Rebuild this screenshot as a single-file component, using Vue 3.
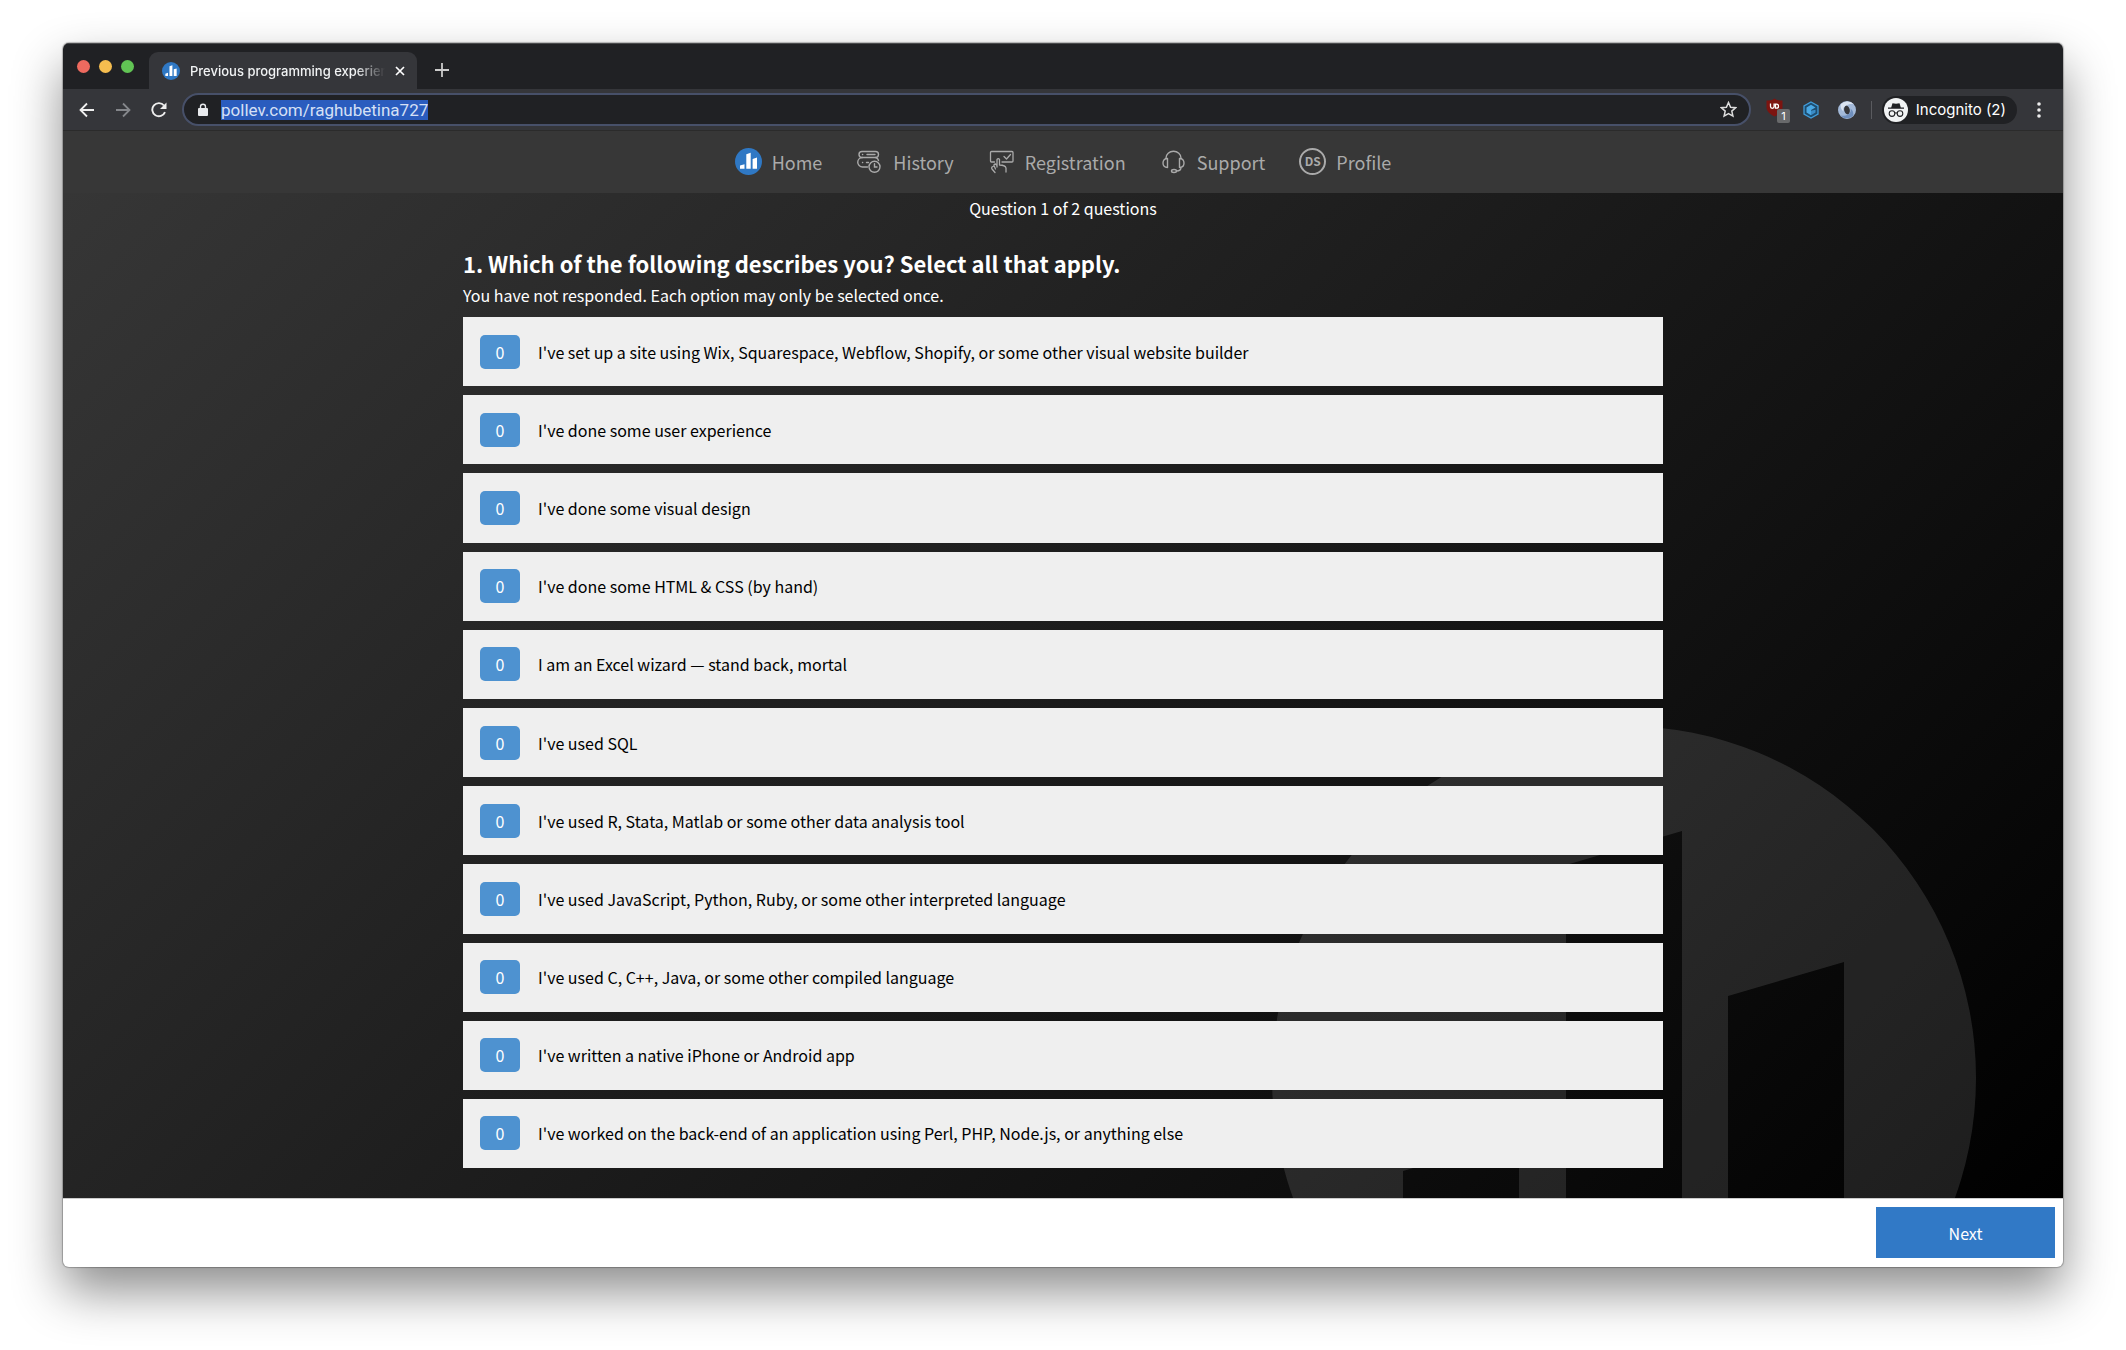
<script setup>
import { ref } from "vue";

const url = ref("pollev.com/raghubetina727");

const links = [
  { name: "Home", icon: "home" },
  { name: "History", icon: "history" },
  { name: "Registration", icon: "registration" },
  { name: "Support", icon: "support" },
  { name: "Profile", icon: "profile" },
];

const options = ref([
  { text: "I've set up a site using Wix, Squarespace, Webflow, Shopify, or some other visual website builder", count: 0 },
  { text: "I've done some user experience", count: 0 },
  { text: "I've done some visual design", count: 0 },
  { text: "I've done some HTML & CSS (by hand)", count: 0 },
  { text: "I am an Excel wizard — stand back, mortal", count: 0 },
  { text: "I've used SQL", count: 0 },
  { text: "I've used R, Stata, Matlab or some other data analysis tool", count: 0 },
  { text: "I've used JavaScript, Python, Ruby, or some other interpreted language", count: 0 },
  { text: "I've used C, C++, Java, or some other compiled language", count: 0 },
  { text: "I've written a native iPhone or Android app", count: 0 },
  { text: "I've worked on the back-end of an application using Perl, PHP, Node.js, or anything else", count: 0 },
]);

function select(option) {
  if (option.count === 0) {
    option.count = 1;
  }
}
</script>

<template>
  <div class="desktop">
    <div class="window">
      <div class="tab-bar">
        <div class="lights">
          <button class="light red" aria-label="Close window"></button>
          <button class="light yellow" aria-label="Minimize window"></button>
          <button class="light green" aria-label="Zoom window"></button>
        </div>
        <div class="tab">
          <svg class="favicon" viewBox="0 0 27 27">
            <circle cx="13.5" cy="13.5" r="13.5" fill="#2f78c4" />
            <path fill="#fff" d="M5 17.5l4-1.2v4.7h-4zM11.2 6.2l4.4-1.2v16h-4.4zM17.6 11l4.4-1.3v11.3h-4.4z" />
          </svg>
          <span class="tab-title">Previous programming experience</span>
          <button class="icon-button" aria-label="Close tab">
            <svg width="10" height="10" viewBox="0 0 10 10"><path d="M1 1l8 8M9 1l-8 8" stroke="#fff" stroke-width="1.7" /></svg>
          </button>
        </div>
        <button class="icon-button new-tab" aria-label="New tab">
          <svg width="14" height="14" viewBox="0 0 14 14"><path d="M7 0v14M0 7h14" stroke="#ccc" stroke-width="1.8" /></svg>
        </button>
      </div>

      <div class="toolbar">
        <div class="arrows">
          <button class="icon-button" aria-label="Back">
            <svg width="16" height="16" viewBox="0 0 16 16"><path d="M15 8H2M8 1.5L1.5 8L8 14.5" fill="none" stroke="#eee" stroke-width="1.8" /></svg>
          </button>
          <button class="icon-button" aria-label="Forward">
            <svg width="16" height="16" viewBox="0 0 16 16"><path d="M1 8h13M8 1.5L14.5 8L8 14.5" fill="none" stroke="#84868a" stroke-width="1.8" /></svg>
          </button>
          <button class="icon-button" aria-label="Reload">
            <svg width="16" height="16" viewBox="0 0 16 16">
              <path d="M14 10.2A6.6 6.6 0 1 1 13 3.5" fill="none" stroke="#eee" stroke-width="1.9" />
              <path d="M15.5 .5v6.5h-6.5z" fill="#eee" />
            </svg>
          </button>
        </div>
        <div class="address">
          <svg width="12" height="14" viewBox="0 0 12 14">
            <rect x="1" y="5" width="10" height="8" rx="1" fill="#e8eaed" />
            <path d="M3.5 5.5V3.7a2.5 2.5 0 0 1 5 0v1.8" fill="none" stroke="#e8eaed" stroke-width="1.4" />
          </svg>
          <label class="url-box">
            <span class="url-size">{{ url }}</span>
            <input v-model="url" class="url" type="text" size="1" aria-label="Address">
          </label>
          <button class="icon-button star" aria-label="Bookmark">
            <svg width="17" height="17" viewBox="0 0 17 17"><path d="M8.5 1.5l2.1 4.7 5 .5-3.8 3.4 1.1 5-4.4-2.6-4.4 2.6 1.1-5L1.400 6.7l5-.5z" fill="none" stroke="#ddd" stroke-width="1.5" /></svg>
          </button>
        </div>
        <div class="extensions">
          <svg width="24" height="26" viewBox="0 0 24 26">
            <path d="M8.5 1.5c2.500 2 5 2 8 2v7c0 4-4 7-8 9-4-2-8-5-8-9v-7c3 0 5.500 0 8-2z" fill="#7c1410" />
            <path d="M4.500 6.500v3a1.800 1.800 0 0 0 3.600 0v-3M9.500 11.200V7.200h1a2 2 0 0 1 0 4z" fill="none" stroke="#fff" stroke-width="1.300" />
            <rect x="11" y="12" width="13" height="14" rx="2" fill="#68696b" />
            <text x="17.500" y="23" text-anchor="middle" fill="#fff" font-size="11">1</text>
          </svg>
          <svg width="18" height="18" viewBox="0 0 18 18">
            <path d="M9 1l7 4v8l-7 4-7-4V5z" fill="#1d4c6e" stroke="#3f9bd8" stroke-width="1.300" />
            <path d="M9 3.800l4.500 2.600L9 9v5.200l-4.500-2.600V6.400z" fill="#4aa8e4" />
            <path d="M9 14.200V9.800l4.500-1v2.800z" fill="#3a8cc6" />
          </svg>
          <svg width="18" height="18" viewBox="0 0 18 18">
            <path fill="#a3b9d8" fill-rule="evenodd" d="M9 0a9 9 0 1 1 0 18a9 9 0 1 1 0-18zM8 4.500c-3 1.500-2.500 8 2 9c3-1.500 2.500-8-2-9z" />
            <path fill="#dbe4f1" d="M3 3a9 9 0 0 1 13 .5c-3-1-6 0-8 1c-3 1.500-3 4-2.500 6c-2.500-2-3.500-5-2.500-7.500z" />
            <path fill="#6f8fbd" d="M15 15a9 9 0 0 1-12.500-.5c3 .8 5.500 0 7.500-1c3-1.500 3-4 2.500-6c2.500 2 3.500 5 2.500 7.500z" />
          </svg>
          <span class="divider"></span>
        </div>
        <button class="incognito">
          <svg width="24" height="24" viewBox="0 0 24 24">
            <circle cx="12" cy="12" r="12" fill="#f1f3f4" />
            <path d="M8.5 5.2l3.5.6 3.5-.6 1.3 4.3H7.2zM4 9.5h16v1.300H4z" fill="#202124" />
            <g fill="none" stroke="#202124" stroke-width="1.1">
              <circle cx="8" cy="15.6" r="2.8" />
              <circle cx="16" cy="15.6" r="2.8" />
              <path d="M10.8 15.2q1.2-.8 2.4 0" />
            </g>
          </svg>
          Incognito (2)
        </button>
        <button class="icon-button" aria-label="Menu">
          <svg width="4" height="16" viewBox="0 0 4 16" fill="#eee">
            <circle cx="2" cy="2" r="1.8" />
            <circle cx="2" cy="8" r="1.8" />
            <circle cx="2" cy="14" r="1.8" />
          </svg>
        </button>
      </div>

      <nav>
        <a v-for="link in links" :key="link.name" href="#">
          <svg v-if="link.icon === 'home'" width="27" height="27" viewBox="0 0 27 27">
            <circle cx="13.5" cy="13.5" r="13.5" fill="#2f78c4" />
            <path fill="#fff" d="M5 17.500l4.500-1.300v4.600H5zM11.300 6.200l4.400-1.500v16.100h-4.400zM17.600 11l4.400-1.500v11.300h-4.400z" />
          </svg>
          <svg v-else-if="link.icon === 'history'" width="27" height="27" viewBox="0 0 27 27" fill="none" stroke="#aaa" stroke-width="1.4" stroke-linecap="round">
            <rect x="3" y="3.5" width="19.5" height="6" rx="3" />
            <path d="M11.500 19H6.500a3.500 3.500 0 0 1 0-9.500M19.500 9.500q2.500.5 3 3M6.500 6.500h.2M11 6.500h8M6.500 14.500h.2M10.500 14.500h2" />
            <circle cx="18.500" cy="18.800" r="5.500" />
            <path d="M18.500 15.800v3.200h2.500" />
          </svg>
          <svg v-else-if="link.icon === 'registration'" width="27" height="27" viewBox="0 0 27 27" fill="none" stroke="#aaa" stroke-width="1.300" stroke-linejoin="round" stroke-linecap="round">
            <path d="M6.500 14H3.500a1 1 0 0 1-1-1V4.500a1 1 0 0 1 1-1h20.500a1 1 0 0 1 1 1V13a1 1 0 0 1-1 1H14" />
            <path d="M16 8.500l2.500 2.500 4-4.500" />
            <path d="M9 19v-7.500q1.200-1.600 2.500 0v5.500q6 .2 6.500 3v4M9 17.500l-1.500-1.500q-1.800.2-1.500 1.500l1.500 3.500M6 18l-2 1q-.8 1 0 2l3 3.500" />
          </svg>
          <svg v-else-if="link.icon === 'support'" width="27" height="27" viewBox="0 0 27 27" fill="none" stroke="#aaa" stroke-width="1.400">
            <path d="M6 11v-1a7.500 6.700 0 0 1 15 0v1" />
            <path d="M7.500 10.500v9q-4.500 0-4.500-4.500t4.500-4.500zM19.500 10.500v9q4.500 0 4.500-4.500t-4.500-4.500z" stroke-linejoin="round" />
            <path d="M21 19.500q0 3.500-4.500 3.500" />
            <ellipse cx="14" cy="23" rx="2.500" ry="1.500" />
          </svg>
          <span v-else class="avatar">DS</span>
          {{ link.name }}
        </a>
      </nav>

      <main>
        <svg class="watermark" viewBox="0 0 704 704">
          <path
            fill="#fff"
            fill-rule="evenodd"
            d="M352 0a352 352 0 1 1 0 704a352 352 0 1 1 0-704zM131 445l116-34v190H131zM294 139l116-34v496H294zM456 270l116-34v365H456z"
          />
        </svg>
        <p class="progress">Question 1 of 2 questions</p>
        <div class="poll">
          <h1>1. Which of the following describes you? Select all that apply.</h1>
          <p class="status">You have not responded. Each option may only be selected once.</p>
          <div class="options">
            <button v-for="option in options" :key="option.text" class="option" @click="select(option)">
              <span class="count">{{ option.count }}</span>
              {{ option.text }}
            </button>
          </div>
        </div>
      </main>

      <footer>
        <button class="next">Next</button>
      </footer>
    </div>
  </div>
</template>

<style>
body {
  margin: 0;
  background: #fff;
}
</style>

<style scoped>
.desktop {
  box-sizing: border-box;
  min-height: 100vh;
  padding: 43px 63px 83px;
  display: flex;
  font-family: "Noto Sans CJK SC", "Noto Sans", sans-serif;
}

.window {
  flex: 1;
  min-width: 0;
  display: flex;
  flex-direction: column;
  border-radius: 6px;
  overflow: hidden;
  background: #fff;
  box-shadow: 0 0 1px 1px rgba(0, 0, 0, 0.25), 0 24px 50px rgba(0, 0, 0, 0.45);
}

button {
  margin: 0;
  border: 0;
  font-family: inherit;
  cursor: pointer;
}

svg {
  flex: none;
  display: block;
}

p,
h1 {
  margin: 0;
}

.icon-button {
  padding: 0;
  background: none;
}

.tab-bar {
  height: 46px;
  box-sizing: border-box;
  display: flex;
  align-items: flex-end;
  background: #202124;
  border-top: 1px solid #4a4b4d;
  font-family: Inter, sans-serif;
}

.lights {
  display: flex;
  gap: 9px;
  padding: 0 15px 16px 14px;
}

.light {
  width: 13px;
  height: 13px;
  padding: 0;
  border-radius: 50%;
}

.red {
  background: #ee6a5f;
}

.yellow {
  background: #f5bd4f;
}

.green {
  background: #61c454;
}

.tab {
  width: 268px;
  height: 37px;
  box-sizing: border-box;
  padding: 0 12px 0 13px;
  display: flex;
  align-items: center;
  border-radius: 9px 9px 0 0;
  background: #35363a;
}

.favicon {
  width: 18px;
  height: 18px;
}

.tab-title {
  flex: 1;
  margin: 0 10px;
  overflow: hidden;
  white-space: nowrap;
  font-size: 13px;
  font-weight: 500;
  color: #f1f3f4;
  mask-image: linear-gradient(to right, #000 85%, transparent);
}

.new-tab {
  margin: 0 0 12px 18px;
}

.toolbar {
  height: 42px;
  box-sizing: border-box;
  padding: 0 22px 0 16px;
  display: flex;
  align-items: center;
  background: #35363a;
  border-bottom: 1px solid #2b2b2b;
  font-family: Inter, sans-serif;
}

.arrows {
  display: flex;
  gap: 20px;
}

.address {
  flex: 1;
  height: 33px;
  box-sizing: border-box;
  margin-left: 15px;
  padding: 0 12px 0 13px;
  display: flex;
  align-items: center;
  border: 2px solid #475069;
  border-radius: 17px;
  background: #202124;
}

/* the hidden text gives the selected input its width */
.url-box {
  display: grid;
  margin-left: 12px;
  font-family: Roboto, sans-serif;
  font-size: 17px;
  line-height: 20px;
}

.url-size,
.url {
  grid-area: 1 / 1;
}

.url-size {
  visibility: hidden;
}

.url {
  width: 100%;
  height: 20px;
  padding: 0;
  border: 0;
  background: #2a5cbe;
  color: #d5e0f5;
  font: inherit;
}

.star {
  margin-left: auto;
}

.extensions {
  display: flex;
  align-items: center;
  gap: 18px;
  margin-left: 15px;
}

.extensions svg:first-child {
  margin-right: -6px;
}

.divider {
  width: 1px;
  height: 18px;
  margin-left: -3px;
  background: #5a5b5f;
}

.incognito {
  height: 28px;
  margin: 0 20px 0 10px;
  padding: 0 11px 0 2px;
  display: flex;
  align-items: center;
  gap: 8px;
  border-radius: 14px;
  background: #202124;
  color: #fff;
  font-size: 15px;
}

nav {
  height: 62px;
  display: flex;
  align-items: center;
  justify-content: center;
  gap: 34px;
  background: #373737;
}

nav a {
  display: flex;
  align-items: center;
  gap: 10px;
  color: #aaa;
  font-size: 18px;
  text-decoration: none;
}

nav svg,
.avatar {
  margin-bottom: 2px;
}

.avatar {
  width: 27px;
  height: 27px;
  box-sizing: border-box;
  border: 2px solid #aaa;
  border-radius: 50%;
  font-size: 12px;
  font-weight: bold;
  line-height: 22px;
  text-align: center;
}

main {
  flex: 1;
  position: relative;
  overflow: hidden;
  display: flex;
  flex-direction: column;
  align-items: center;
  background: linear-gradient(135deg, #363636, #000);
  color: #fff;
}

.watermark {
  position: absolute;
  right: 87px;
  top: 533px;
  width: 704px;
  opacity: 0.11;
}

.progress {
  font-size: 16px;
  line-height: 30px;
}

.poll {
  position: relative;
  flex: 1;
  width: 60%;
  display: flex;
  flex-direction: column;
  padding: 22px 0 30px;
}

h1 {
  font-size: 22px;
  line-height: 36px;
}

.status {
  font-size: 16px;
  line-height: 28px;
  margin-bottom: 8px;
}

.options {
  flex: 1;
  display: flex;
  flex-direction: column;
  gap: 9px;
}

.option {
  flex: 1;
  padding: 0 17px;
  display: flex;
  align-items: center;
  gap: 18px;
  background: #efefef;
  color: #000;
  font-size: 16px;
  text-align: left;
}

.count {
  width: 40px;
  border-radius: 5px;
  background: #4e92d0;
  color: #fff;
  line-height: 34px;
  text-align: center;
}

footer {
  display: flex;
  justify-content: flex-end;
  padding: 8px 8px 9px;
  border-top: 1px solid #ccc;
}

.next {
  width: 179px;
  height: 51px;
  background: #3179c6;
  color: #fff;
  font-size: 16px;
}
</style>
